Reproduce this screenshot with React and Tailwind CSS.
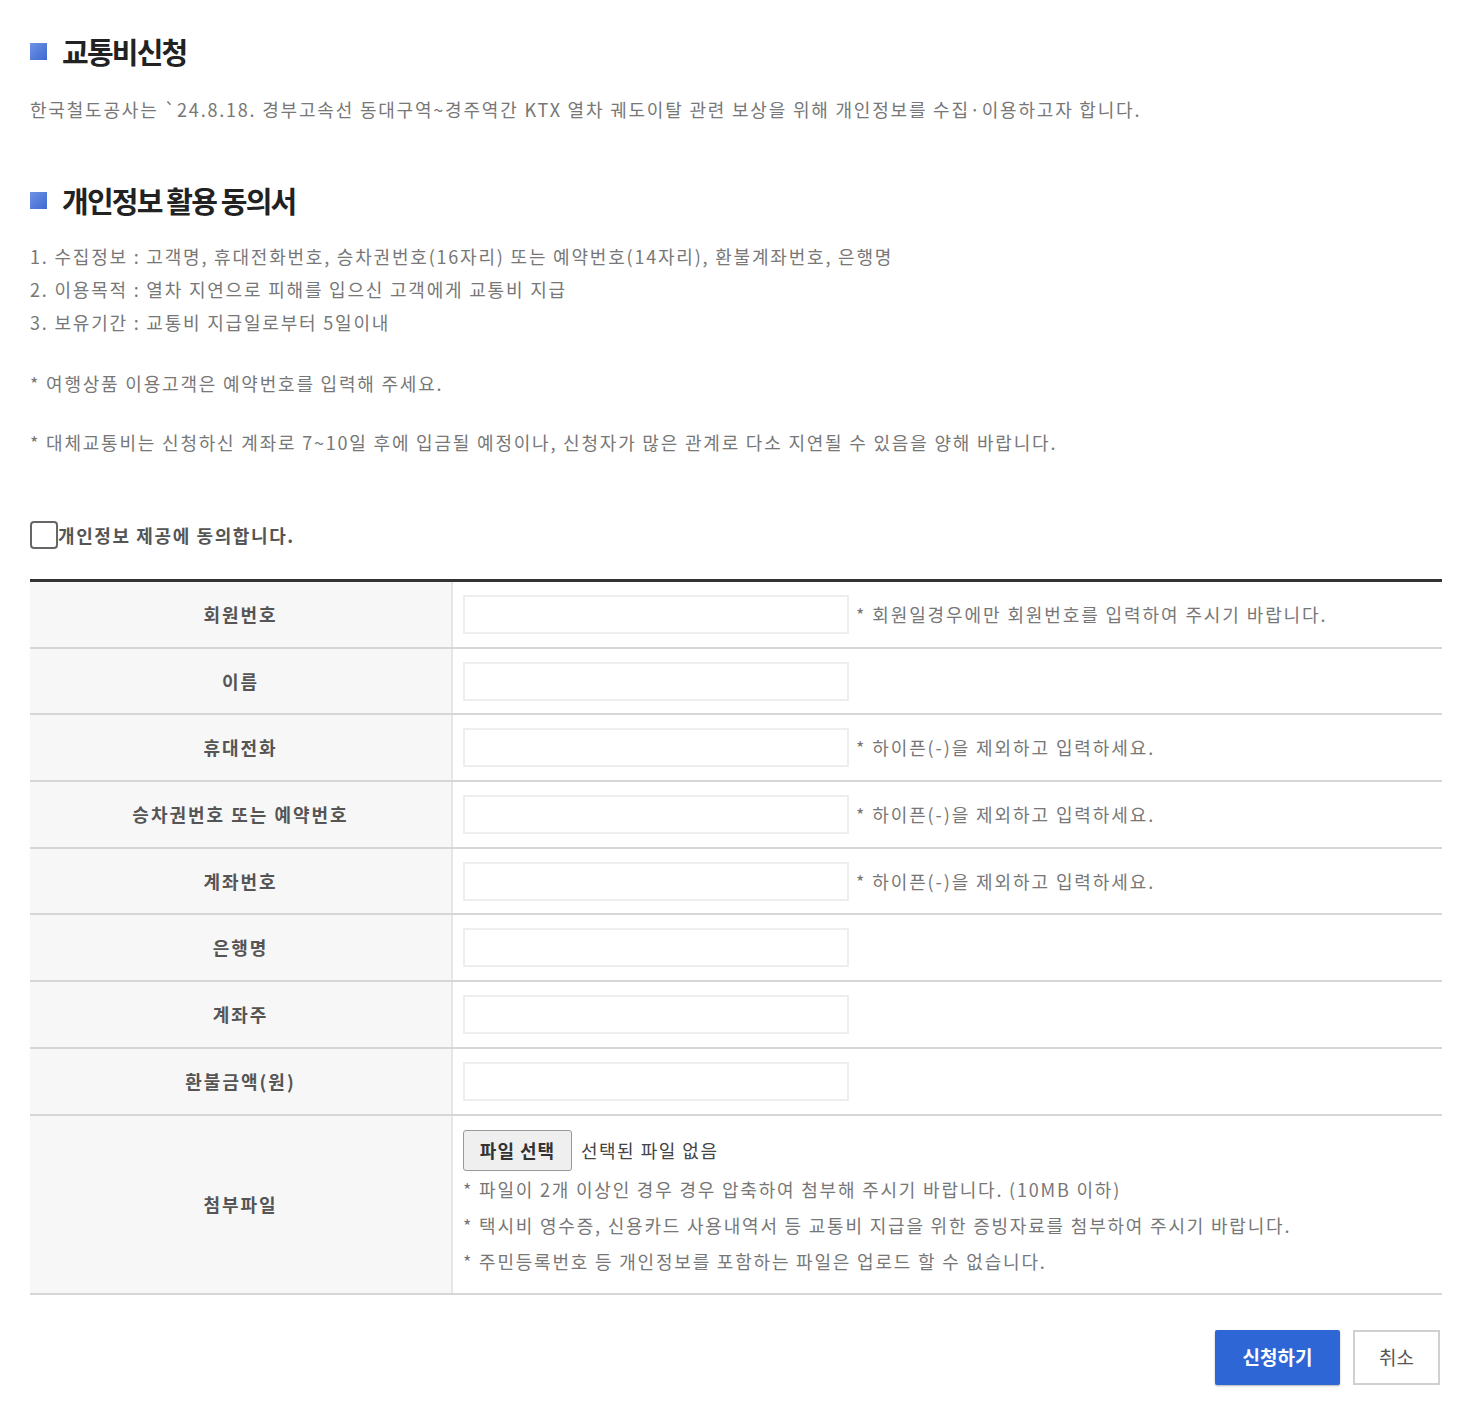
const font = { fontFamily: '"Noto Sans CJK KR", "Noto Sans", sans-serif' };

const rows = [
  { label: "회원번호", help: "* 회원일경우에만 회원번호를 입력하여 주시기 바랍니다." },
  { label: "이름" },
  { label: "휴대전화", help: "* 하이픈(-)을 제외하고 입력하세요." },
  { label: "승차권번호 또는 예약번호", help: "* 하이픈(-)을 제외하고 입력하세요." },
  { label: "계좌번호", help: "* 하이픈(-)을 제외하고 입력하세요." },
  { label: "은행명" },
  { label: "계좌주" },
  { label: "환불금액(원)" },
];

function Heading({ children }) {
  return (
    <h2 className="flex items-center gap-[15px] text-[29px] font-bold tracking-[-1.8px] text-[#222]">
      <span className="h-[17px] w-[17px] bg-gradient-to-br from-[#6f94e6] to-[#3d68cf]" />
      {children}
    </h2>
  );
}

export default function App() {
  return (
    <div className="min-h-[1408px] bg-white px-[30px] pt-[30px] text-[#777]" style={font}>
      <Heading>교통비신청</Heading>
      <p className="mt-[22px] text-[18px] tracking-[1.8px]">
        한국철도공사는 `24.8.18. 경부고속선 동대구역~경주역간 KTX 열차 궤도이탈 관련 보상을 위해 개인정보를 수집·이용하고자 합니다.
      </p>

      <div className="mt-[56px]">
        <Heading>개인정보 활용 동의서</Heading>
      </div>
      <div className="mt-[22px] flex flex-col gap-[8px] text-[18px] leading-[25px] tracking-[1.8px]">
        <p>1. 수집정보 : 고객명, 휴대전화번호, 승차권번호(16자리) 또는 예약번호(14자리), 환불계좌번호, 은행명</p>
        <p>2. 이용목적 : 열차 지연으로 피해를 입으신 고객에게 교통비 지급</p>
        <p>3. 보유기간 : 교통비 지급일로부터 5일이내</p>
      </div>
      <p className="mt-[36px] text-[18px] leading-[25px] tracking-[1.8px]">* 여행상품 이용고객은 예약번호를 입력해 주세요.</p>
      <p className="mt-[34px] text-[18px] leading-[25px] tracking-[1.8px]">* 대체교통비는 신청하신 계좌로 7~10일 후에 입금될 예정이나, 신청자가 많은 관계로 다소 지연될 수 있음을 양해 바랍니다.</p>

      <label className="mt-[66px] flex items-center">
        <span className="h-[28px] w-[28px] rounded-[4px] border-2 border-[#666] bg-white" />
        <span className="text-[18px] font-bold tracking-[1.6px] text-[#555]">개인정보 제공에 동의합니다.</span>
      </label>

      <div className="mt-[30px] w-[1412px] border-t-[3px] border-[#333]">
        {rows.map((r) => (
          <div key={r.label} className="grid h-[66.7px] grid-cols-[423px_1fr] border-b-2 border-[#d6d6d6]">
            <div className="flex items-center justify-center border-r-2 border-[#e6e6e6] bg-[#f7f7f7] text-[18px] font-bold tracking-[2px] text-[#555]">
              {r.label}
            </div>
            <div className="flex items-center gap-[7px] pl-[10px]">
              <div className="h-[39px] w-[386px] border-2 border-[#eeeeee] bg-white" />
              {r.help && <span className="text-[18px] tracking-[1.9px] text-[#777]">{r.help}</span>}
            </div>
          </div>
        ))}
        <div className="grid h-[179px] grid-cols-[423px_1fr] border-b-2 border-[#d6d6d6]">
          <div className="flex items-center justify-center border-r-2 border-[#e6e6e6] bg-[#f7f7f7] text-[18px] font-bold tracking-[2px] text-[#555]">
            첨부파일
          </div>
          <div className="pl-[10px] pt-[14px]">
            <div className="flex items-center gap-[9px]">
              <span className="flex h-[41px] w-[109px] items-center justify-center rounded-[3px] border border-[#999] bg-[#efefef] text-[18px] font-bold tracking-[1px] text-[#333]">
                파일 선택
              </span>
              <span className="text-[18px] tracking-[1.5px] text-[#444]">선택된 파일 없음</span>
            </div>
            <div className="mt-[6px] flex flex-col gap-[11px] text-[18px] leading-[25px] tracking-[1.8px]">
              <p>* 파일이 2개 이상인 경우 경우 압축하여 첨부해 주시기 바랍니다. (10MB 이하)</p>
              <p>* 택시비 영수증, 신용카드 사용내역서 등 교통비 지급을 위한 증빙자료를 첨부하여 주시기 바랍니다.</p>
              <p>* 주민등록번호 등 개인정보를 포함하는 파일은 업로드 할 수 없습니다.</p>
            </div>
          </div>
        </div>
      </div>

      <div className="mt-[35px] flex w-[1410px] justify-end gap-[13px]">
        <button className="h-[55px] w-[125px] rounded-[2px] bg-[#2f66d6] text-[19px] font-bold text-white shadow-[0_1px_2px_rgba(0,0,0,0.3)]">
          신청하기
        </button>
        <button className="h-[55px] w-[87px] border-2 border-[#d0d0d0] bg-white text-[19px] text-[#555]">
          취소
        </button>
      </div>
    </div>
  );
}
